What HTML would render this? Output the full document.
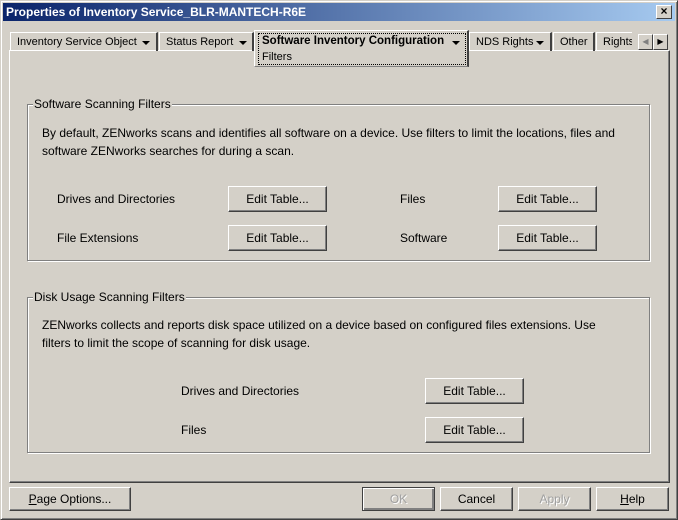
<!DOCTYPE html><html><head><style>
*{margin:0;padding:0;box-sizing:border-box}
body{width:678px;height:520px;background:#d4d0c8;font-family:"Liberation Sans",sans-serif;font-size:12px;color:#000;position:relative;overflow:hidden}
.a{position:absolute;white-space:nowrap}
.win{position:absolute;left:0;top:0;width:678px;height:520px;border:1px solid;border-color:#d4d0c8 #404040 #404040 #d4d0c8;box-shadow:inset 1px 1px #fff,inset -1px -1px #808080}
.title{position:absolute;left:3px;top:3px;width:672px;height:18px;background:linear-gradient(to right,#0a246a,#a6caf0);color:#fff;font-weight:bold;font-size:12px;line-height:18px;padding-left:3px}
.btn{position:absolute;height:26px;border:1px solid;border-color:#fff #404040 #404040 #fff;box-shadow:inset -1px -1px #808080;text-align:center;line-height:24px;white-space:nowrap}
.dis{color:#a0a0a0;text-shadow:1px 1px #fff}
.grp{position:absolute;border:1px solid #808080;box-shadow:1px 1px #fff,inset 1px 1px #fff}
.gl{position:absolute;top:-8px;left:5px;background:#d4d0c8;padding:0 1px;white-space:nowrap}
.tab{position:absolute;top:32px;height:19px;border-top:1px solid #fff;border-left:1px solid #fff;border-right:2px solid #404040;line-height:18px;padding-left:6px;white-space:nowrap;overflow:hidden;font-size:11px}
.tri{position:absolute;width:0;height:0;border-left:4px solid transparent;border-right:4px solid transparent;border-top:4px solid #000}
</style></head><body>
<div class="win"></div>
<div class="title">Properties of Inventory Service_BLR-MANTECH-R6E</div>
<div class="a" style="left:656px;top:5px;width:16px;height:14px;background:#d4d0c8;border:1px solid;border-color:#fff #404040 #404040 #fff;text-align:center;line-height:11px;font-size:12px;font-weight:bold">×</div>
<div class="a" style="left:9px;top:50px;width:661px;height:433px;border:1px solid;border-color:#fff #404040 #404040 #fff;box-shadow:inset -1px -1px #808080"></div>
<div class="tab" style="left:10px;width:148px">Inventory Service Object</div>
<div class="tri" style="left:142px;top:41px"></div>
<div class="tab" style="left:159px;width:95px">Status Report</div>
<div class="tri" style="left:239px;top:41px"></div>
<div class="a" style="left:254px;top:30px;width:215px;height:37px;background:#d4d0c8;border-top:1px solid #fff;border-left:1px solid #fff;border-right:2px solid #404040;border-bottom:1px solid #808080"></div>
<div class="a" style="left:258px;top:33px;width:208px;height:32px;border:1px dotted #000"></div>
<div class="a" style="left:262px;top:35px;font-weight:bold;font-size:11.5px">Software Inventory Configuration</div>
<div class="tri" style="left:452px;top:41px"></div>
<div class="a" style="left:262px;top:51px;font-size:11px">Filters</div>
<div class="tab" style="left:469px;width:83px">NDS Rights</div>
<div class="tri" style="left:536px;top:41px"></div>
<div class="tab" style="left:553px;width:42px">Other</div>
<div class="tab" style="left:596px;width:36px;border-right:none">Rights</div>
<div class="a" style="left:638px;top:34px;width:15px;height:16px;border:1px solid;border-color:#fff #404040 #404040 #fff;color:#808080;font-size:8px;text-align:center;line-height:14px">◀</div>
<div class="a" style="left:653px;top:34px;width:15px;height:16px;border:1px solid;border-color:#fff #404040 #404040 #fff;font-size:8px;text-align:center;line-height:14px">▶</div>

<div class="grp" style="left:27px;top:104px;width:623px;height:157px"><span class="gl">Software Scanning Filters</span></div>
<div class="a" style="left:42px;top:124px;line-height:18px">By default, ZENworks scans and identifies all software on a device. Use filters to limit the locations, files and<br>software ZENworks searches for during a scan.</div>
<div class="a" style="left:57px;top:192px">Drives and Directories</div>
<div class="a" style="left:57px;top:231px">File Extensions</div>
<div class="a" style="left:400px;top:192px">Files</div>
<div class="a" style="left:400px;top:231px">Software</div>
<div class="btn" style="left:228px;top:186px;width:99px">Edit Table...</div>
<div class="btn" style="left:228px;top:225px;width:99px">Edit Table...</div>
<div class="btn" style="left:498px;top:186px;width:99px">Edit Table...</div>
<div class="btn" style="left:498px;top:225px;width:99px">Edit Table...</div>

<div class="grp" style="left:27px;top:297px;width:623px;height:156px"><span class="gl">Disk Usage Scanning Filters</span></div>
<div class="a" style="left:42px;top:316px;line-height:18px">ZENworks collects and reports disk space utilized on a device based on configured files extensions. Use<br>filters to limit the scope of scanning for disk usage.</div>
<div class="a" style="left:181px;top:384px">Drives and Directories</div>
<div class="a" style="left:181px;top:423px">Files</div>
<div class="btn" style="left:425px;top:378px;width:99px">Edit Table...</div>
<div class="btn" style="left:425px;top:417px;width:99px">Edit Table...</div>

<div class="btn" style="left:9px;top:487px;width:122px;height:24px;line-height:22px"><u>P</u>age Options...</div>
<div class="btn dis" style="left:362px;top:487px;width:73px;height:24px;line-height:22px;border-color:#404040;box-shadow:inset 1px 1px #fff,inset -2px -2px #808080">OK</div>
<div class="btn" style="left:440px;top:487px;width:73px;height:24px;line-height:22px">Cancel</div>
<div class="btn dis" style="left:518px;top:487px;width:73px;height:24px;line-height:22px">Apply</div>
<div class="btn" style="left:596px;top:487px;width:73px;height:24px;line-height:22px"><u>H</u>elp</div>
</body></html>
